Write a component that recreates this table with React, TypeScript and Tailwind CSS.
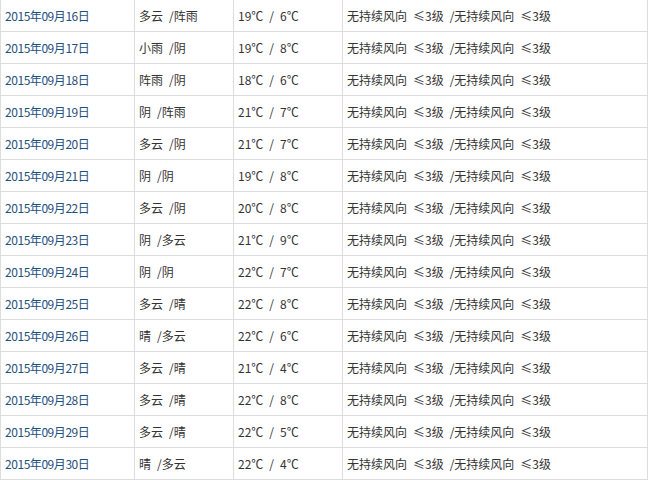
const rows: [string, string, string, string][] = [
  ['16', '多云 /阵雨', '19', '6'],
  ['17', '小雨 /阴', '19', '8'],
  ['18', '阵雨 /阴', '18', '6'],
  ['19', '阴 /阵雨', '21', '7'],
  ['20', '多云 /阴', '21', '7'],
  ['21', '阴 /阴', '19', '8'],
  ['22', '多云 /阴', '20', '8'],
  ['23', '阴 /多云', '21', '9'],
  ['24', '阴 /阴', '22', '7'],
  ['25', '多云 /晴', '22', '8'],
  ['26', '晴 /多云', '22', '6'],
  ['27', '多云 /晴', '21', '4'],
  ['28', '多云 /晴', '22', '8'],
  ['29', '多云 /晴', '22', '5'],
  ['30', '晴 /多云', '22', '4']
]

export default function App() {
  return (
    <div className="w-[648px] bg-white text-[12px] leading-[31px] text-[#333] font-['Noto_Sans_CJK_SC',sans-serif] [word-spacing:3.3px]">
      {rows.map(([day, weather, hi, lo]) => (
        <div key={day} className="flex h-[32px] border-b border-l border-[#ddd]">
          <div className="w-[134px] shrink-0 border-r border-[#ddd] pl-[4px] tracking-[-0.45px] text-[#1f4f80]">
            2015年09月{day}日
          </div>
          <div className="w-[99px] shrink-0 border-r border-[#ddd] pl-[4px]">{weather}</div>
          <div className="w-[109px] shrink-0 border-r border-[#ddd] pl-[4px]">
            {hi}℃ / {lo}℃
          </div>
          <div className="w-[305px] shrink-0 border-r border-[#ddd] pl-[4px]">
            无持续风向 ≤3级 /无持续风向 ≤3级
          </div>
        </div>
      ))}
    </div>
  )
}
